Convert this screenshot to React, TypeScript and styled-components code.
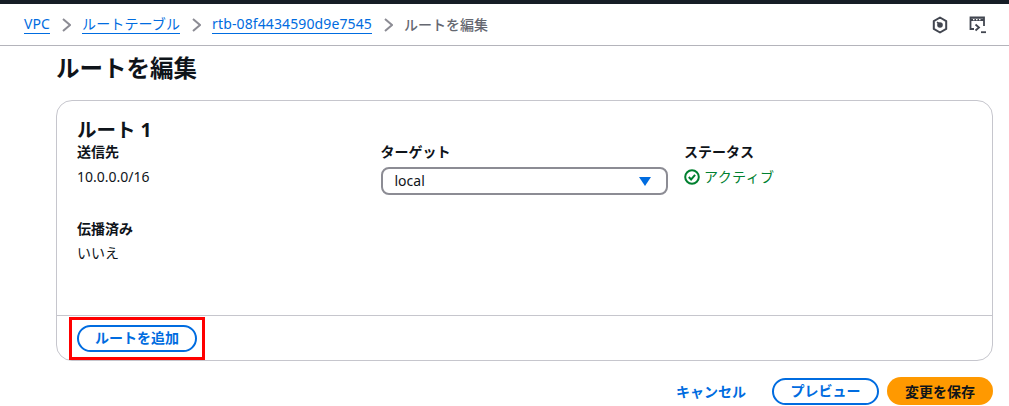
import React from "react";
import styled, { createGlobalStyle } from "styled-components";

const Global = createGlobalStyle`
  html, body { margin: 0; padding: 0; background: #fff; }
  body {
    font-family: "Noto Sans", "Noto Sans CJK JP", sans-serif;
    font-size: 14px;
    line-height: 20px;
    color: #0f141a;
  }
`;

function HexIcon() {
  return (
    <svg width="16" height="18" viewBox="0 0 16 18" fill="none">
      <path d="M8 1.500l6.200 3.600v7.800L8 16.500l-6.200-3.600V5.100z" stroke="#424650" strokeWidth="2" strokeLinejoin="round" />
      <circle cx="8" cy="9" r="2.800" fill="#424650" />
      <path d="M5 6.200l4 2.800" stroke="#424650" strokeWidth="1.600" />
    </svg>
  );
}

function ShellIcon() {
  return (
    <svg width="18" height="18" viewBox="0 0 18 18" fill="none">
      <path d="M5 13H1.500V1.500h13.500V10" stroke="#424650" strokeWidth="1.800" />
      <path d="M1.500 2.500h13.500v2.500H1.500z" fill="#424650" />
      <path d="M4 3.700h1.500M7 3.700h1.500M10 3.700h1.500" stroke="#fff" strokeWidth="1.200" />
      <path d="M6.500 8.500l3.500 3-3.500 3" stroke="#424650" strokeWidth="1.800" />
      <path d="M12 16.200h5" stroke="#424650" strokeWidth="1.800" />
    </svg>
  );
}

function Chevron() {
  return (
    <ChevronSvg width="10" height="14" viewBox="0 0 10 14" fill="none">
      <path d="M2 1L9 7l-7 6" stroke="#8c8c94" strokeWidth="2" />
    </ChevronSvg>
  );
}

function App() {
  return (
    <Page>
      <Global />
      <TopStrip />
      <BreadcrumbBar>
        <Crumbs>
          <CrumbLink>VPC</CrumbLink>
          <Chevron />
          <CrumbLink>ルートテーブル</CrumbLink>
          <Chevron />
          <CrumbLink>rtb-08f4434590d9e7545</CrumbLink>
          <Chevron />
          <CrumbCurrent>ルートを編集</CrumbCurrent>
        </Crumbs>
        <Tools>
          <HexIcon />
          <ShellIcon />
        </Tools>
      </BreadcrumbBar>
      <Content>
        <Title>ルートを編集</Title>
        <Card>
          <CardBody>
            <RouteTitle>ルート 1</RouteTitle>
            <Fields>
              <Field>
                <Label>送信先</Label>
                <Value>10.0.0.0/16</Value>
              </Field>
              <Field>
                <Label>ターゲット</Label>
                <Select>
                  <span>local</span>
                  <Caret />
                </Select>
              </Field>
              <Field>
                <Label>ステータス</Label>
                <Status>
                  <svg width="16" height="16" viewBox="0 0 16 16" fill="none">
                    <circle cx="8" cy="8" r="6.800" stroke="#00802f" strokeWidth="2" />
                    <path d="M4.800 8l2.300 2.400 4-4.600" stroke="#00802f" strokeWidth="2" />
                  </svg>
                  <StatusText>アクティブ</StatusText>
                </Status>
              </Field>
            </Fields>
            <PropagatedField>
              <Label>伝播済み</Label>
              <PropagatedValue>いいえ</PropagatedValue>
            </PropagatedField>
          </CardBody>
          <CardFooter>
            <Highlight>
              <OutlineButton $compact>ルートを追加</OutlineButton>
            </Highlight>
          </CardFooter>
        </Card>
        <Actions>
          <TextButton>キャンセル</TextButton>
          <OutlineButton>プレビュー</OutlineButton>
          <PrimaryButton>変更を保存</PrimaryButton>
        </Actions>
      </Content>
    </Page>
  );
}

const Page = styled.div`
  width: 1009px;
  height: 406px;
  overflow: hidden;
  background: #fff;
`;

const TopStrip = styled.div`
  height: 4px;
  background: #161d26;
`;

const BreadcrumbBar = styled.div`
  height: 41px;
  box-sizing: content-box;
  border-bottom: 1px solid #b4b4bb;
  display: flex;
  align-items: center;
  justify-content: space-between;
  padding: 0 22px 0 24px;
`;

const Crumbs = styled.div`
  display: flex;
  align-items: center;
`;

const CrumbLink = styled.a`
  color: #006ce0;
  font-size: 14px;
  line-height: 18px;
  letter-spacing: 0.120px;
  border-bottom: 1px solid #006ce0;
`;

const CrumbCurrent = styled.span`
  color: #656871;
  font-size: 14px;
  line-height: 18px;
  font-weight: 500;
`;

const ChevronSvg = styled.svg`
  margin: 0 11px;
`;

const Tools = styled.div`
  display: flex;
  align-items: center;
  gap: 21px;
`;

const Content = styled.div`
  padding: 0 16px 0 56px;
`;

const Title = styled.h1`
  margin: 0;
  height: 54px;
  padding-top: 6px;
  box-sizing: border-box;
  font-size: 23.500px;
  line-height: 32px;
  font-weight: 700;
`;

const Card = styled.div`
  border: 1px solid #c6c6cd;
  border-radius: 16px;
  height: 261px;
  box-sizing: border-box;
  display: flex;
  flex-direction: column;
`;

const CardBody = styled.div`
  flex: 1;
  padding: 17px 20px 0;
`;

const RouteTitle = styled.h2`
  margin: 0;
  font-size: 19.500px;
  line-height: 24px;
  font-weight: 700;
`;

const Fields = styled.div`
  display: grid;
  grid-template-columns: repeat(3, 303.500px);
`;

const Field = styled.div`
  display: flex;
  flex-direction: column;
`;

const PropagatedField = styled(Field)`
  margin-top: 24px;
`;

const Label = styled.div`
  font-size: 14px;
  line-height: 20px;
  font-weight: 700;
`;

const Value = styled.div`
  margin-top: 5px;
  font-size: 14px;
  line-height: 20px;
`;

const PropagatedValue = styled(Value)`
  margin-top: 4px;
`;

const Select = styled.div`
  margin-top: 5px;
  width: 287px;
  height: 28px;
  box-sizing: border-box;
  border: 2px solid #8c8c94;
  border-radius: 8px;
  padding: 0 15px 0 12px;
  display: flex;
  align-items: center;
  justify-content: space-between;
  font-size: 14px;
`;

const Caret = styled.span`
  width: 0;
  height: 0;
  border-left: 6px solid transparent;
  border-right: 6px solid transparent;
  border-top: 9px solid #006ce0;
`;

const Status = styled.div`
  margin-top: 5px;
  display: flex;
  align-items: center;
  gap: 4px;
  color: #00802f;
  font-size: 14px;
  line-height: 20px;
`;

const StatusText = styled.span`
  letter-spacing: 0.400px;
`;

const CardFooter = styled.div`
  height: 45px;
  box-sizing: border-box;
  border-top: 1px solid #c6c6cd;
  padding: 0 12px;
  display: flex;
  align-items: center;
`;

const Highlight = styled.div`
  border: 3px solid #ff0000;
  padding: 5px;
  display: inline-flex;
`;

const OutlineButton = styled.button<{ $compact?: boolean }>`
  height: 27px;
  width: ${(p) => (p.$compact ? "120px" : "107px")};
  padding: 0;
  border: 2px solid #006ce0;
  border-radius: 20px;
  background: #fff;
  color: #006ce0;
  font-family: inherit;
  font-size: 14px;
  line-height: 20px;
  font-weight: 700;
`;

const TextButton = styled.button`
  border: 0;
  background: none;
  padding: 0;
  margin-right: 18px;
  color: #006ce0;
  font-family: inherit;
  font-size: 14px;
  font-weight: 700;
`;

const PrimaryButton = styled.button`
  height: 28px;
  width: 106px;
  padding: 0;
  border: 0;
  border-radius: 20px;
  background: #ff9900;
  color: #0f141a;
  font-family: inherit;
  font-size: 14px;
  font-weight: 700;
`;

const Actions = styled.div`
  margin-top: 16px;
  display: flex;
  justify-content: flex-end;
  align-items: center;
  gap: 8px;
`;

export default App;
